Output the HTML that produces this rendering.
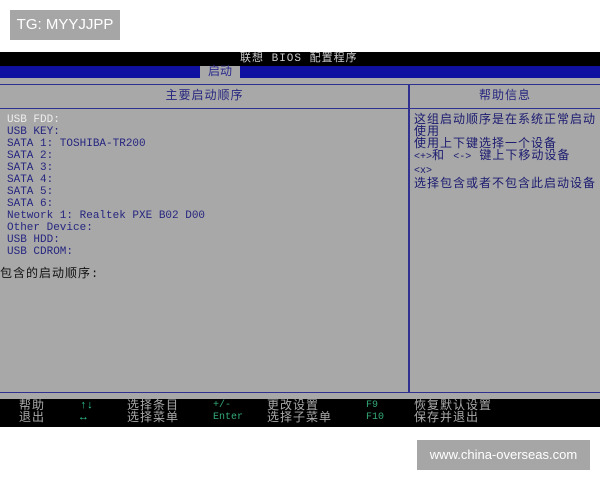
<!DOCTYPE html>
<html><head><meta charset="utf-8"><style>
*{margin:0;padding:0;box-sizing:border-box}
body{width:600px;height:480px;background:#fff;position:relative;overflow:hidden;font-family:"Liberation Mono","Noto Sans CJK SC",monospace}
.a{position:absolute;white-space:nowrap}
.m{font-size:11px;line-height:12px;color:#262680}
.c{font-size:12px;letter-spacing:1px}
</style></head><body>
<div class="a" style="left:10px;top:10px;width:110px;height:30px;background:#a6a6a6;color:#fff;font:15px/30px 'Liberation Sans',sans-serif;text-align:center">TG: MYYJJPP</div>
<div class="a" style="left:0;top:52px;width:600px;height:14px;background:#000"></div>
<div class="a" style="left:240px;top:52px;font-size:11px;line-height:14px;color:#ccc;letter-spacing:1px">联想 BIOS 配置程序</div>
<div class="a" style="left:0;top:66px;width:600px;height:12px;background:#1010a0"></div>
<div class="a" style="left:200px;top:66px;width:40px;height:13px;background:#a8a8a8;color:#2a2a90;font-size:12px;line-height:13px;text-align:center">启动</div>
<div class="a" style="left:0;top:78px;width:600px;height:321px;background:#a8a8a8"></div>
<div class="a" style="left:0;top:84px;width:600px;height:1px;background:#303090"></div>
<div class="a" style="left:0;top:108px;width:409px;height:1px;background:#303090"></div>
<div class="a" style="left:410px;top:108px;width:190px;height:1px;background:#303090"></div>
<div class="a" style="left:408px;top:84px;width:2px;height:309px;background:#303090"></div>
<div class="a" style="left:0;top:392px;width:600px;height:1px;background:#303090"></div>
<div class="a m c" style="left:0;width:409px;top:90px;text-align:center">主要启动顺序</div>
<div class="a m c" style="left:410px;width:190px;top:90px;text-align:center">帮助信息</div>
<div class="a m" style="left:7px;top:114px"><span style="color:#eee">USB FDD:</span><br>USB KEY:<br>SATA 1: TOSHIBA-TR200<br>SATA 2:<br>SATA 3:<br>SATA 4:<br>SATA 5:<br>SATA 6:<br>Network 1: Realtek PXE B02 D00<br>Other Device:<br>USB HDD:<br>USB CDROM:</div>
<div class="a m c" style="left:0;top:268px;color:#111">包含的启动顺序:</div>
<div class="a m c" style="left:414px;top:114px;color:#1a1a70">这组启动顺序是在系统正常启动<br>使用<br>使用上下键选择一个设备<br><span style="font-size:10px;letter-spacing:0">&lt;+&gt;</span>和 <span style="font-size:10px;letter-spacing:0">&lt;-&gt;</span> 键上下移动设备<br><span style="font-size:10px;letter-spacing:0">&lt;x&gt;</span><br>选择包含或者不包含此启动设备</div>
<div class="a" style="left:0;top:399px;width:600px;height:28px;background:#000"></div>
<div class="a c" style="left:19px;top:400px;line-height:12px;color:#aaa">帮助<br>退出</div>
<div class="a" style="left:80px;top:400px;font-size:11px;line-height:12px;color:#3c9">↑↓<br>↔</div>
<div class="a c" style="left:127px;top:400px;line-height:12px;color:#aaa">选择条目<br>选择菜单</div>
<div class="a" style="left:213px;top:400px;font-size:10px;line-height:12px;color:#3a7">+/-<br>Enter</div>
<div class="a c" style="left:267px;top:400px;line-height:12px;color:#aaa">更改设置<br>选择子菜单</div>
<div class="a" style="left:366px;top:400px;font-size:10px;line-height:12px;color:#3a7">F9<br>F10</div>
<div class="a c" style="left:414px;top:400px;line-height:12px;color:#aaa">恢复默认设置<br>保存并退出</div>
<div class="a" style="left:417px;top:440px;width:173px;height:30px;background:#a6a6a6;color:#fff;font:13px/30px 'Liberation Sans',sans-serif;text-align:center">www.china-overseas.com</div>
</body></html>
